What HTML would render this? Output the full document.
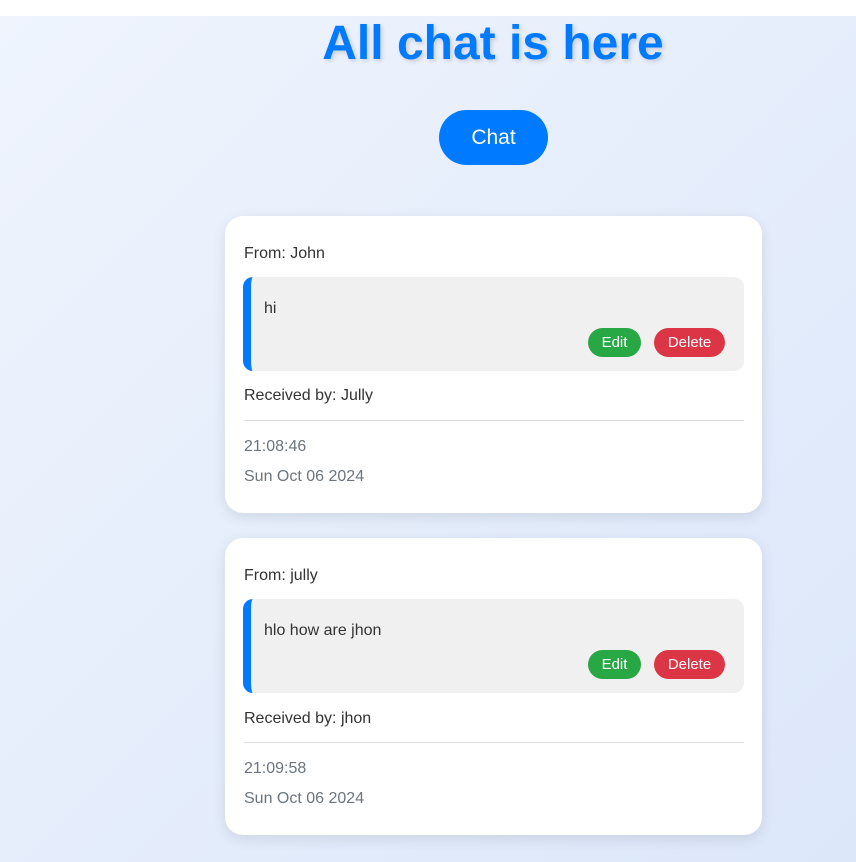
<!DOCTYPE html>
<html><head><style>
html,body{margin:0;padding:0}
body{width:856px;height:862px;overflow:hidden;font-family:"Liberation Sans",sans-serif;background:#fff;position:relative}
.bg{position:absolute;top:16px;left:0;right:0;bottom:0;background:linear-gradient(135deg,#eff4fd,#dce7fa)}
h1{position:absolute;top:14px;left:0;width:986px;text-align:center;margin:0;font-size:48px;font-weight:bold;color:#007bff;text-shadow:2px 2px 4px rgba(0,0,0,0.15);line-height:60px}
.chat{position:absolute;left:439px;top:110px;width:109px;height:55px;border-radius:28px;background:#007bff;color:#fff;font-size:21px;text-align:center;line-height:55px}
.card{position:absolute;left:225px;width:537px;background:#fff;border-radius:18px;box-shadow:0 4px 14px rgba(0,0,0,0.1);color:#333;font-size:16px}
.t{position:absolute;left:19px}
.msg{position:absolute;left:18px;width:501px;height:94px;top:61px;background:#f0f0f0;border-radius:10px;border-left:8px solid #007bff;box-sizing:border-box}
.b{position:absolute;top:51px;height:29px;border-radius:15px;color:#fff;font-size:15px;line-height:29px;text-align:center}
.hr{position:absolute;left:19px;width:500px;top:204px;height:1px;background:#ddd}
.g{color:#6c757d}
</style></head><body>
<div class="bg"></div>
<h1>All chat is here</h1>
<div class="chat">Chat</div>
<div class="card" style="top:216px;height:297px">
<div class="t" style="top:29px">From: John</div>
<div class="msg"><div style="position:absolute;left:13px;top:23px">hi</div>
<div class="b" style="left:337px;width:53px;background:#28a745">Edit</div>
<div class="b" style="left:403px;width:71px;background:#dc3545">Delete</div></div>
<div class="t" style="top:171px">Received by: Jully</div>
<div class="hr"></div>
<div class="t g" style="top:222px">21:08:46</div>
<div class="t g" style="top:252px">Sun Oct 06 2024</div>
</div>
<div class="card" style="top:538px;height:297px">
<div class="t" style="top:29px">From: jully</div>
<div class="msg"><div style="position:absolute;left:13px;top:23px">hlo how are jhon</div>
<div class="b" style="left:337px;width:53px;background:#28a745">Edit</div>
<div class="b" style="left:403px;width:71px;background:#dc3545">Delete</div></div>
<div class="t" style="top:172px">Received by: jhon</div>
<div class="hr"></div>
<div class="t g" style="top:222px">21:09:58</div>
<div class="t g" style="top:252px">Sun Oct 06 2024</div>
</div>
</body></html>
